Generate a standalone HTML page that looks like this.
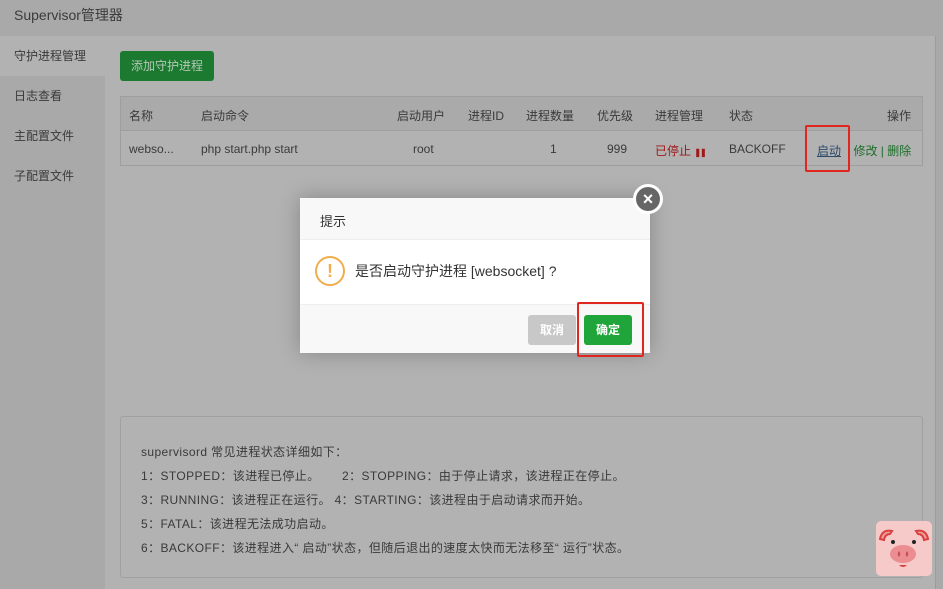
<!DOCTYPE html>
<html><head><meta charset="utf-8"><style>
*{margin:0;padding:0;box-sizing:border-box}
body{width:943px;height:589px;overflow:hidden;background:#b2b2b2;font-family:"Liberation Sans","Noto Sans CJK SC",sans-serif;font-size:12px;color:#3a3a3a;position:relative}
.abs{position:absolute}
.top{left:0;top:0;width:943px;height:36px;background:#a9a9a9;font-size:14px;padding:5px 0 0 14px;color:#3b3b3b}
.side{left:0;top:36px;width:105px;height:553px;background:#a9a9a9}
.side div{height:40px;line-height:40px;padding-left:14px;font-size:12px;color:#3a3a3a}
.side .act{background:#b2b2b2}
.rstrip{left:935px;top:36px;width:8px;height:553px;background:#a9a9a9;border-left:1px solid #9c9c9c}
.btn{left:120px;top:51px;width:94px;height:30px;background:#1b7a30;color:#b6c8b8;border-radius:3px;line-height:30px;text-align:center;font-size:12px}
.tbl{left:120px;top:96px;width:803px;height:70px;border:1px solid #9e9e9e}
.th{left:0;top:0;width:801px;height:34px;background:#aaaaaa;border-bottom:1px solid #9e9e9e}
.t{position:absolute;white-space:nowrap;font-size:12px}
.box{left:120px;top:416px;width:803px;height:162px;border:1px solid #a0a0a0;border-radius:3px}
.box p{position:absolute;left:20px;white-space:nowrap;font-size:12px;color:#3a3a3a;letter-spacing:0.4px}
.dlg{left:300px;top:198px;width:350px;height:155px;background:#fff;box-shadow:0 0 20px rgba(0,0,0,.25)}
.dh{height:42px;background:#f8f8f8;border-bottom:1px solid #eee;padding:13px 0 0 20px;font-size:13px;color:#333}
.df{left:0;top:106px;width:350px;height:49px;background:#f8f8f8;border-top:1px solid #eee}
.red{border:2px solid #e0261f;border-radius:2px}
</style></head><body>
<div class="abs top">Supervisor管理器</div>
<div class="abs side"><div class="act">守护进程管理</div><div>日志查看</div><div>主配置文件</div><div>子配置文件</div></div>
<div class="abs rstrip"></div>
<div class="abs btn">添加守护进程</div>
<div class="abs tbl">
 <div class="abs th"></div>
 <span class="t" style="left:8px;top:10px">名称</span>
 <span class="t" style="left:80px;top:10px">启动命令</span>
 <span class="t" style="left:276px;top:10px">启动用户</span>
 <span class="t" style="left:347px;top:10px">进程ID</span>
 <span class="t" style="left:405px;top:10px">进程数量</span>
 <span class="t" style="left:476px;top:10px">优先级</span>
 <span class="t" style="left:534px;top:10px">进程管理</span>
 <span class="t" style="left:608px;top:10px">状态</span>
 <span class="t" style="left:766px;top:10px">操作</span>
 <span class="t" style="left:8px;top:45px">webso...</span>
 <span class="t" style="left:80px;top:45px">php start.php start</span>
 <span class="t" style="left:292px;top:45px">root</span>
 <span class="t" style="left:429px;top:45px">1</span>
 <span class="t" style="left:486px;top:45px">999</span>
 <span class="t" style="left:534px;top:45px;color:#a01818">已停止 <b style="font-size:8px;letter-spacing:-1px">❚❚</b></span>
 <span class="t" style="left:608px;top:45px">BACKOFF</span>
 <span class="t" style="left:696px;top:45px;color:#2a4a6a;text-decoration:underline">启动</span>
 <span class="t" style="left:726px;top:45px;color:#1c6e2a">| 修改 | 删除</span>
</div>
<div class="abs red" style="left:805px;top:125px;width:45px;height:47px"></div>
<div class="abs box">
 <p style="top:26px">supervisord 常见进程状态详细如下：</p>
 <p style="top:50px">1：STOPPED：该进程已停止。&nbsp;&nbsp;&nbsp;&nbsp;&nbsp;&nbsp;2：STOPPING：由于停止请求，该进程正在停止。</p>
 <p style="top:74px">3：RUNNING：该进程正在运行。 4：STARTING：该进程由于启动请求而开始。</p>
 <p style="top:98px">5：FATAL：该进程无法成功启动。</p>
 <p style="top:122px">6：BACKOFF：该进程进入“ 启动”状态，但随后退出的速度太快而无法移至“ 运行”状态。</p>
</div>
<div class="abs dlg">
 <div class="dh">提示</div>
 <div class="abs" style="left:15px;top:58px;width:30px;height:30px;border:2px solid #f0ad4e;border-radius:50%;color:#f0ad4e;font-weight:bold;font-size:18px;text-align:center;line-height:26px">!</div>
 <div class="abs" style="left:55px;top:63px;font-size:14px;color:#333;white-space:nowrap">是否启动守护进程 [websocket] ?</div>
 <div class="abs df">
  <div class="abs" style="left:228px;top:10px;width:48px;height:30px;background:#c8c8c8;border-radius:3px;color:#fff;font-weight:bold;text-align:center;line-height:30px">取消</div>
  <div class="abs" style="left:284px;top:10px;width:48px;height:30px;background:#20a53a;border-radius:3px;color:#fff;font-weight:bold;text-align:center;line-height:30px">确定</div>
 </div>
</div>
<div class="abs red" style="left:577px;top:302px;width:67px;height:55px"></div>
<div class="abs" style="left:633px;top:184px;width:30px;height:30px;border-radius:50%;background:#fff;padding:3px">
 <div style="width:24px;height:24px;border-radius:50%;background:#666;color:#fff;text-align:center;line-height:24px;font-size:18px;font-weight:bold">×</div>
</div>
<div class="abs" style="left:876px;top:521px;width:56px;height:55px;background:#f7caca;border-radius:5px">
 <svg width="56" height="55" viewBox="0 0 56 55">
  <path d="M4 18 Q6 8 16 10 L14 13 Q9 13 8 19 Z" fill="#f0a0a0" stroke="#d9403f" stroke-width="2"/>
  <path d="M52 18 Q50 8 40 10 L42 13 Q47 13 48 19 Z" fill="#f0a0a0" stroke="#d9403f" stroke-width="2"/>
  <circle cx="17" cy="21" r="2" fill="#222"/><circle cx="38" cy="21" r="2" fill="#222"/>
  <ellipse cx="27" cy="33" rx="13" ry="9" fill="#ec8d92"/>
  <ellipse cx="23" cy="33" rx="1.2" ry="2.5" fill="#c9505a"/><ellipse cx="31" cy="33" rx="1.2" ry="2.5" fill="#c9505a"/>
  <path d="M23 44 Q27 48 31 44 Z" fill="#d9403f"/>
 </svg>
</div>
</body></html>
